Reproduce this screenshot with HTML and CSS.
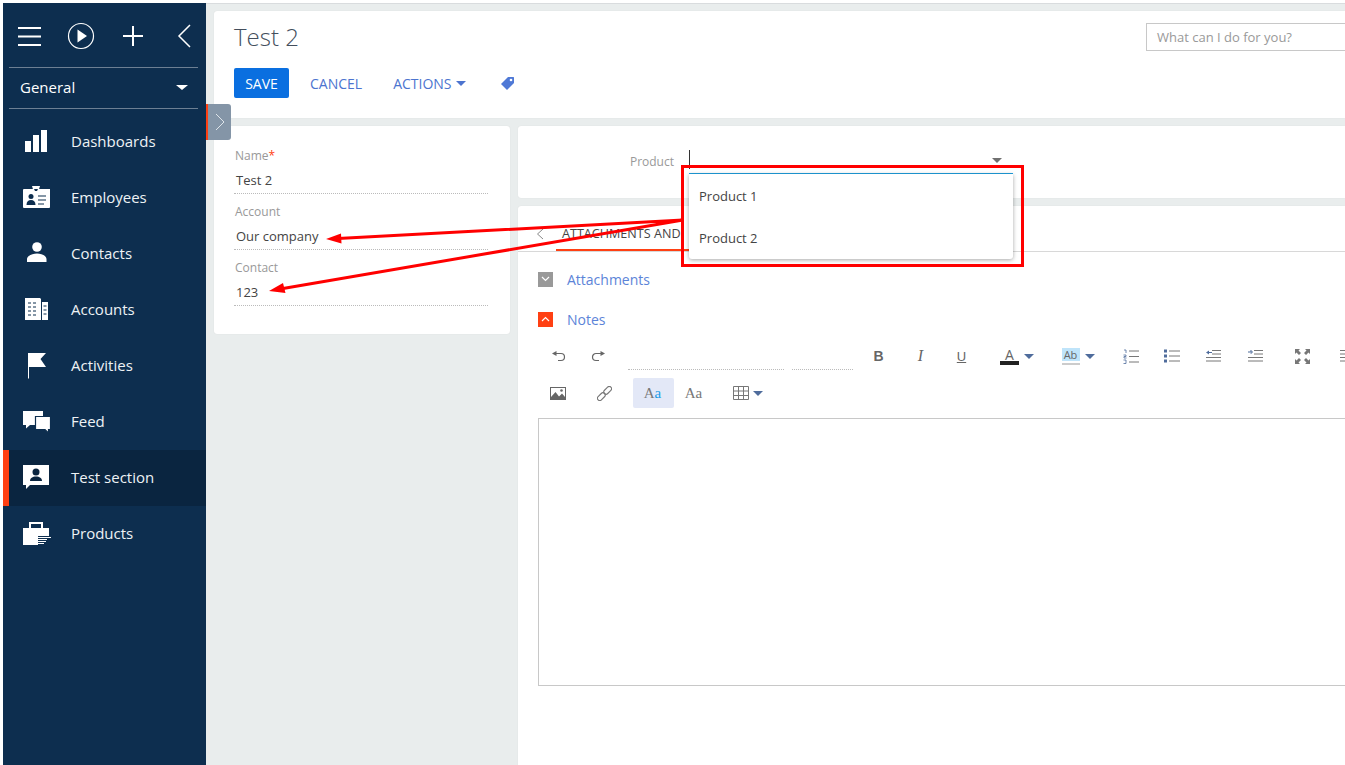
FILE: index.html
```html
<!DOCTYPE html>
<html lang="en">
<head>
    <meta charset="UTF-8">
    <meta name="viewport" content="width=device-width, initial-scale=1.0">
    <title>Test 2</title>
    <link rel="stylesheet" href="styles.css">
</head>
<body>
    <div class="app">
        <aside class="sidebar">
            <div class="side-top">
                <svg class="top-icon hamburger" width="24" height="20" viewBox="0 0 24 20"><path d="M0 2h23M0 10.500h23M0 19h23" stroke="#fff" stroke-width="2"/></svg>
                <svg class="top-icon play" width="28" height="28" viewBox="0 0 28 28"><circle cx="14" cy="14" r="12.500" fill="none" stroke="#fff" stroke-width="1.200"/><path d="M10.500 7.500 20 14l-9.500 6.500z" fill="#fff"/></svg>
                <svg class="top-icon plus" width="22" height="22" viewBox="0 0 22 22"><path d="M1 11h20M11 1v20" stroke="#fff" stroke-width="2"/></svg>
                <svg class="top-icon back" width="14" height="24" viewBox="0 0 14 24"><path d="M13 1 2 12l11 11" fill="none" stroke="#fff" stroke-width="1.500"/></svg>
            </div>
            <div class="side-group">
                <span>General</span>
                <i class="side-caret"></i>
            </div>
            <nav class="side-menu">
                <a class="side-item">
                    <svg class="side-icon" viewBox="0 0 30 30"><path d="M4 15h6v11H4zM12 9h6v17h-6zM20 4h6v22h-6z" fill="#fff"/></svg>
                    Dashboards
                </a>
                <a class="side-item">
                    <svg class="side-icon" viewBox="0 0 30 30"><path d="M3 7h26v18a1 1 0 0 1-1 1H3a1 1 0 0 1-1-1V8a1 1 0 0 1 1-1z" fill="#fff"/><path d="M11 4h8l-1.500 5h-5z" fill="#fff"/><path d="M13 7h4l-1 2h-2z" fill="#0d2e4f"/><circle cx="10" cy="14.500" r="2.500" fill="#0d2e4f"/><path d="M5.500 23c0-3.500 1.800-5 4.500-5s4.500 1.500 4.500 5z" fill="#0d2e4f"/><path d="M17 14h8M17 18h8M17 22h6" stroke="#0d2e4f" stroke-width="1.200"/></svg>
                    Employees
                </a>
                <a class="side-item">
                    <svg class="side-icon" viewBox="0 0 30 30"><circle cx="16" cy="9" r="4.800" fill="#fff"/><path d="M6 24v-3c0-3 5-5.500 10-5.500S25.500 18 25.500 21v3z" fill="#fff"/></svg>
                    Contacts
                </a>
                <a class="side-item">
                    <svg class="side-icon" viewBox="0 0 30 30"><path d="M4 4h15l1 1v21H4zM21 8h6v18h-6z" fill="#fff"/><path d="M7 9h3M12 9h3M7 13h3M12 13h3M7 17h3M12 17h3M7 21h3M12 21h3M22.500 12h3M22.500 16h3M22.500 20h3" stroke="#0d2e4f" stroke-width="1.200"/></svg>
                    Accounts
                </a>
                <a class="side-item">
                    <svg class="side-icon" viewBox="0 0 30 30"><path d="M7 3h18l-5.500 6 5.500 8H8v11.500H7z" fill="#fff"/></svg>
                    Activities
                </a>
                <a class="side-item">
                    <svg class="side-icon" viewBox="0 0 30 30"><path d="M2 5h20v14H9l-4 3.500V19H2z" fill="#fff"/><path d="M14.500 10.500h15v13h-2v3.500l-3.500-3.500h-9.500z" fill="#fff" stroke="#0d2e4f" stroke-width="1.200"/></svg>
                    Feed
                </a>
                <a class="side-item active">
                    <svg class="side-icon" viewBox="0 0 30 30"><path d="M2 3h26v20H9l-4 4v-4H2z" fill="#fff"/><circle cx="15" cy="10" r="3.500" fill="#0a2540"/><path d="M9 19c0-3 2.500-4.500 6-4.500s6 1.500 6 4.500z" fill="#0a2540"/></svg>
                    Test section
                </a>
                <a class="side-item">
                    <svg class="side-icon" viewBox="0 0 30 30"><path d="M9 10V5h12v5" fill="none" stroke="#fff" stroke-width="2"/><path d="M2 10h26v8H17v9H2z" fill="#fff"/><path d="M17 19.500h13M17 21.500h9M17 23.500h8M17 25.500h6" stroke="#fff" stroke-width="1"/></svg>
                    Products
                </a>
            </nav>
        </aside>

        <main class="content">
            <section class="card page-head">
                <div class="head-title">
                    <h1>Test 2</h1>
                    <div class="search-box">What can I do for you?</div>
                </div>
                <div class="head-actions">
                    <button class="btn-save">SAVE</button>
                    <a class="btn-link btn-cancel">CANCEL</a>
                    <a class="btn-link btn-actions">ACTIONS<i class="caret caret-blue"></i></a>
                    <svg class="tag-icon" width="15" height="15" viewBox="0 0 15 15"><path d="M8 1h5.500a.500.500 0 0 1 .500.500V7l-7 7-6-6z" fill="#4f79d6"/><circle cx="11" cy="4" r="1.300" fill="#fff"/></svg>
                </div>
            </section>

            <div class="columns">
                <section class="card left-card">
                    <div class="field">
                        <label>Name<em>*</em></label>
                        <div class="field-value">Test 2</div>
                    </div>
                    <div class="field">
                        <label>Account</label>
                        <div class="field-value">Our company</div>
                    </div>
                    <div class="field">
                        <label>Contact</label>
                        <div class="field-value">123</div>
                    </div>
                </section>

                <div class="right-col">
                    <section class="card product-card">
                        <label>Product</label>
                        <div class="product-input">
                            <i class="text-cursor"></i>
                            <i class="caret caret-gray"></i>
                            <ul class="dropdown">
                                <li>Product 1</li>
                                <li>Product 2</li>
                            </ul>
                        </div>
                    </section>

                    <section class="card tabs-card">
                        <div class="tabs">
                            <svg class="tab-back" width="8" height="12" viewBox="0 0 8 12"><path d="M7 1 1.500 6 7 11" fill="none" stroke="#888" stroke-width="1"/></svg>
                            <div class="tab-active">ATTACHMENTS AND</div>
                        </div>
                        <div class="group-row">
                            <span class="group-toggle"><svg width="9" height="6" viewBox="0 0 9 6"><path d="M1 1l3.500 3.500L8 1" fill="none" stroke="#fff" stroke-width="1.200"/></svg></span>
                            <a>Attachments</a>
                        </div>
                        <div class="group-row">
                            <span class="group-toggle open"><svg width="9" height="6" viewBox="0 0 9 6"><path d="M1 5l3.500-3.500L8 5" fill="none" stroke="#fff" stroke-width="1.200"/></svg></span>
                            <a>Notes</a>
                        </div>

                        <div class="toolbar">
                            <span class="tb-btn"><svg width="15" height="12" viewBox="0 0 15 12"><path d="M1 3.500 5.500 1v5z" fill="#666"/><path d="M5 3.500h5a3.500 3.500 0 0 1 0 7H7" fill="none" stroke="#666" stroke-width="1.200"/></svg></span>
                            <span class="tb-btn"><svg width="15" height="12" viewBox="0 0 15 12"><path d="M14 3.500 9.500 1v5z" fill="#666"/><path d="M10 3.500H5a3.500 3.500 0 0 0 0 7h3" fill="none" stroke="#666" stroke-width="1.200"/></svg></span>
                            <span class="tb-select font-name"></span>
                            <span class="tb-select font-size"></span>
                            <span class="tb-btn tb-text bold">B</span>
                            <span class="tb-btn tb-text italic">I</span>
                            <span class="tb-btn tb-text underline">U</span>
                            <span class="tb-btn color-btn">
                                <span class="color-a">A</span>
                                <i class="caret caret-blue"></i>
                            </span>
                            <span class="tb-btn color-btn back-color">
                                <span class="color-ab">Ab</span>
                                <i class="caret caret-blue"></i>
                            </span>
                            <span class="tb-btn list-number"><svg width="16" height="15" viewBox="0 0 16 15"><path d="M6 2h10M6 7.500h10M6 13h10" stroke="#777" stroke-width="1"/><path d="M1 1h2v3M.500 6H3v1.500H1V9h2.500M.500 11H3v3.500H.500" fill="none" stroke="#4f6c9c" stroke-width=".800"/></svg></span>
                            <span class="tb-btn"><svg width="16" height="14" viewBox="0 0 16 14"><path d="M5 2h11M5 7h11M5 12h11" stroke="#777" stroke-width="1"/><path d="M0 .500h3v3H0zM0 5.500h3v3H0zM0 10.500h3v3H0z" fill="#4f6c9c"/></svg></span>
                            <span class="tb-btn outdent"><svg width="15" height="12" viewBox="0 0 15 12"><path d="M6 .500h9M6 4h9M0 7.500h15M0 11h15" stroke="#777" stroke-width="1"/><path d="M3 .500 0 2.500l3 2zM3 2h3v1H3z" fill="#4f6c9c"/></svg></span>
                            <span class="tb-btn indent"><svg width="15" height="12" viewBox="0 0 15 12"><path d="M6 .500h9M6 4h9M0 7.500h15M0 11h15" stroke="#777" stroke-width="1"/><path d="M3 2.500H0v-1h2.500V0h1v1.500H5v1H3.500V4h-1z" fill="#4f6c9c"/></svg></span>
                            <span class="tb-btn fullscreen"><svg width="15" height="15" viewBox="0 0 15 15"><path d="M0 0h5L3.500 1.500l2.500 2.500L4 6 1.500 3.500 0 5zM15 0v5l-1.500-1.500L11 6 9 4l2.500-2.500L10 0zM0 15v-5l1.500 1.500L4 9l2 2-2.500 2.500L5 15zM15 15h-5l1.500-1.500L9 11l2-2 2.500 2.500L15 10z" fill="#777"/></svg></span>
                            <span class="tb-btn align-btn"><svg width="15" height="12" viewBox="0 0 15 12"><path d="M0 .500h15M0 4h15M0 7.500h15M0 11h15" stroke="#777" stroke-width="1"/></svg></span>
                        </div>
                        <div class="toolbar toolbar-second">
                            <span class="tb-btn"><svg width="16" height="13" viewBox="0 0 16 13"><path d="M0 0h16v13H0z" fill="#666"/><path d="M1 1h14v9l-3-3.500-3 3L5.500 5 1 10z" fill="#fff"/><circle cx="11.500" cy="3.500" r="1.300" fill="#666"/></svg></span>
                            <span class="tb-btn link-btn"><svg width="15" height="15" viewBox="0 0 15 15"><g fill="none" stroke="#777" stroke-width="1.100" transform="rotate(-45 7.500 7.500)"><rect x="-1.500" y="5.200" width="9" height="4.600" rx="2.300"/><rect x="7.500" y="5.200" width="9" height="4.600" rx="2.300"/></g></svg></span>
                            <span class="tb-aa selected">A<b>a</b></span>
                            <span class="tb-aa">Aa</span>
                            <span class="tb-btn table-btn">
                                <svg width="16" height="14" viewBox="0 0 16 14"><path d="M.500.500h15v13H.500zM.500 5h15M.500 9.500h15M5.500.500v13M10.500.500v13" fill="none" stroke="#777" stroke-width="1"/></svg>
                                <i class="caret caret-blue"></i>
                            </span>
                        </div>
                        <div class="editor"></div>
                    </section>
                </div>
            </div>
        </main>

        <div class="side-toggle">
            <svg width="10" height="18" viewBox="0 0 10 18"><path d="M1 1l8 8-8 8" fill="none" stroke="#dfe5ea" stroke-width="1"/></svg>
        </div>

        <!-- red marks drawn on top of the screenshot -->
        <svg class="annotation" width="1345" height="765" viewBox="0 0 1345 765">
            <rect x="682.500" y="166.500" width="340" height="99" fill="none" stroke="#f00" stroke-width="3"/>
            <path d="M683 220 338 238.500M683 220 283 288.500" stroke="#f00" stroke-width="3" fill="none"/>
            <path d="M326 239l15-5.500 .500 10zM269 291l14-8 2.500 10z" fill="#f00"/>
        </svg>
    </div>
</body>
</html>
```
FILE: styles.css
```css
* {
    box-sizing: border-box;
}

body {
    margin: 0;
    font-family: 'Open Sans', 'Liberation Sans', sans-serif;
    background: #fff;
    color: #444;
    height: 765px;
    overflow: hidden;
}

.app {
    position: relative;
    display: flex;
    width: 1345px;
    height: 765px;
    padding: 3px 0 0 3px;
    overflow: hidden;
}

/* sidebar */
.sidebar {
    flex: none;
    width: 203px;
    background: #0d2e4f;
    color: #fff;
}

.side-top {
    position: relative;
    height: 64px;
}

.top-icon {
    position: absolute;
}

.hamburger { left: 15px; top: 23px; }
.play { left: 64px; top: 19px; }
.plus { left: 119px; top: 22px; }
.back { left: 174px; top: 21px; }

.side-group {
    display: flex;
    align-items: center;
    justify-content: space-between;
    height: 42px;
    margin: 0 8px 0 6px;
    padding: 0 10px 2px 11px;
    border-top: 1px solid #6c7f93;
    border-bottom: 1px solid #6c7f93;
    font-size: 15px;
}

.side-caret {
    border-top: 5px solid #fff;
    border-left: 6px solid transparent;
    border-right: 6px solid transparent;
}

.side-menu {
    margin-top: 5px;
}

.side-item {
    display: flex;
    align-items: center;
    height: 56px;
    padding: 0 0 2px 18px;
    font-size: 15px;
    color: #eef2f5;
}

.side-item.active {
    background: #0a2540;
    border-left: 6px solid #ff4013;
    padding-left: 12px;
}

.side-icon {
    width: 30px;
    height: 30px;
    margin-right: 20px;
}

.side-toggle {
    position: absolute;
    left: 206px;
    top: 104px;
    display: flex;
    align-items: center;
    justify-content: center;
    width: 25px;
    height: 36px;
    background: #8495a7;
    border-left: 2px solid #ff4013;
    border-radius: 0 3px 3px 0;
}

/* main area */
.content {
    flex: none;
    width: 1139px;
    padding: 7px 0 0 8px;
    background: #e9eded;
    border-top: 1px solid #d9dcde;
}

.card {
    background: #fff;
    border-radius: 3px;
    box-shadow: 0 0 1px rgba(0, 0, 0, 0.12);
}

.page-head {
    height: 107px;
    padding: 10px 20px 0;
    border-radius: 3px 0 0 3px;
}

.head-title {
    display: flex;
    justify-content: space-between;
    height: 47px;
}

h1 {
    margin: 0;
    font-size: 24px;
    font-weight: 300;
    line-height: 32px;
    color: #444e5c;
}

.search-box {
    width: 200px;
    height: 28px;
    margin: 2px -21px 0 0;
    padding-left: 10px;
    border: 1px solid #c8c8c8;
    font-size: 13px;
    line-height: 26px;
    color: #999;
}

.head-actions {
    display: flex;
    align-items: center;
    height: 30px;
}

.btn-save {
    width: 55px;
    height: 30px;
    padding: 0;
    border: none;
    border-radius: 2px;
    background: #0a6fe0;
    color: #fff;
    font-family: inherit;
    font-size: 14px;
}

.btn-link {
    display: flex;
    align-items: center;
    font-size: 14px;
    color: #4c74cf;
}

.btn-cancel { margin-left: 21px; }
.btn-actions { margin-left: 31px; }

.tag-icon { margin-left: 34px; }

.caret {
    display: inline-block;
    border-top: 5px solid #4f6c9c;
    border-left: 5px solid transparent;
    border-right: 5px solid transparent;
}

.btn-actions .caret {
    margin-left: 4px;
    border-top-color: #4c74cf;
}

.caret-gray {
    border-top-color: #707070;
}

.columns {
    display: flex;
    gap: 8px;
    margin-top: 8px;
}

.left-card {
    flex: none;
    width: 296px;
    height: 208px;
    padding: 20px 22px 0 20px;
}

.field {
    height: 56px;
}

.field label {
    display: block;
    padding-left: 1px;
    font-size: 12px;
    line-height: 20px;
    color: #999;
}

.field em {
    font-style: normal;
    color: #ff4013;
}

.field-value {
    height: 28px;
    padding: 5px 0 0 2px;
    border-bottom: 1px dotted #bbb;
    font-size: 13px;
    line-height: 18px;
}

.right-col {
    flex: none;
    width: 827px;
}

.product-card {
    position: relative;
    height: 72px;
    border-radius: 3px 0 0 3px;
}

.product-card label {
    position: absolute;
    right: 671px;
    top: 27px;
    font-size: 12px;
    line-height: 18px;
    color: #999;
}

.product-input {
    position: absolute;
    left: 171px;
    top: 24px;
    width: 324px;
    height: 24px;
    border-bottom: 1px solid #1fa0e0;
}

.text-cursor {
    position: absolute;
    left: 0;
    top: 0;
    width: 1px;
    height: 19px;
    background: #333;
}

.product-input .caret {
    position: absolute;
    right: 11px;
    top: 8px;
}

.dropdown {
    position: absolute;
    left: 0;
    top: 24px;
    z-index: 5;
    width: 324px;
    height: 85px;
    margin: 0;
    padding: 1px 0 0 10px;
    list-style: none;
    background: #fff;
    border-radius: 0 0 3px 3px;
    box-shadow: 0 1px 4px rgba(0, 0, 0, 0.35);
    font-size: 13px;
}

.dropdown li {
    height: 42px;
    line-height: 42px;
}

.tabs-card {
    height: 560px;
    margin-top: 8px;
    padding-left: 20px;
    border-radius: 3px 0 0 0;
}

.tabs {
    position: relative;
    height: 46px;
    margin-left: -20px;
    border-bottom: 1px solid #d8d8d8;
}

.tab-back {
    position: absolute;
    left: 18px;
    top: 22px;
}

.tab-active {
    position: absolute;
    left: 38px;
    top: 0;
    width: 133px;
    height: 45px;
    padding: 19px 0 0 6px;
    border-bottom: 2px solid #ff4013;
    font-size: 12.6px;
    line-height: 18px;
    white-space: nowrap;
}

.group-row {
    display: flex;
    align-items: center;
    height: 40px;
    font-size: 14px;
    color: #5c84d8;
}

.tabs + .group-row {
    margin-top: 7px;
}

.group-toggle {
    display: flex;
    align-items: center;
    justify-content: center;
    width: 15px;
    height: 15px;
    margin-right: 14px;
    background: #999;
}

.group-toggle.open {
    background: #ff4013;
}

.toolbar {
    display: flex;
    align-items: center;
    height: 30px;
    margin-top: 2px;
    white-space: nowrap;
}

.toolbar-second {
    height: 30px;
    margin-top: 7px;
}

.tb-btn {
    display: flex;
    flex: none;
    align-items: center;
    justify-content: center;
    width: 41px;
    height: 30px;
}

.toolbar .tb-btn:first-child {
    width: 40px;
}

.tb-select {
    flex: none;
    height: 30px;
    border-bottom: 1px dotted #bbb;
    transform: translateY(-1px);
}

.font-name { width: 156px; margin-left: 9px; }
.font-size { width: 61px; margin-left: 8px; }

.tb-text {
    font-family: 'Liberation Sans', sans-serif;
    font-size: 14px;
    color: #666;
}

.bold { margin-left: 5px; font-weight: bold; }
.italic { margin-left: 1px; font-family: 'Liberation Serif', serif; font-size: 16px; font-style: italic; }
.underline { font-size: 13px; text-decoration: underline; }

.color-btn {
    gap: 5px;
    width: 62px;
}

.underline + .color-btn {
    margin-left: 4px;
}

.back-color {
    margin-left: -1px;
}

.color-a {
    width: 19px;
    height: 17px;
    border-bottom: 4px solid #222;
    font-size: 14px;
    line-height: 14px;
    text-align: center;
    color: #666;
}

.color-ab {
    width: 18px;
    height: 17px;
    background: linear-gradient(#bfe4fa 13px, #fff 13px);
    border-bottom: 2px solid #ccc;
    font-size: 11px;
    line-height: 14px;
    text-align: center;
    color: #666;
}

.list-number { margin-left: 1px; }
.outdent { margin-left: 1px; }
.indent { margin-left: 1px; }
.fullscreen { margin-left: 6px; }
.align-btn { margin-left: 4px; }

.link-btn { margin-left: 6px; }

.tb-aa {
    flex: none;
    width: 41px;
    height: 30px;
    padding-right: 2px;
    font-family: 'Liberation Serif', serif;
    font-size: 15px;
    line-height: 30px;
    text-align: center;
    color: #777;
}

.tb-aa.selected {
    margin-left: 8px;
    background: #e3e8f7;
    border-radius: 2px;
}

.tb-aa b {
    font-weight: normal;
    color: #1a9be8;
}

.table-btn {
    gap: 4px;
    margin-left: 16px;
    width: 34px;
}

.editor {
    height: 268px;
    margin-top: 10px;
    margin-right: -20px;
    border: 1px solid #c8c8c8;
}

/* annotation layer */
.annotation {
    position: absolute;
    left: 0;
    top: 0;
    z-index: 10;
    pointer-events: none;
}
```
